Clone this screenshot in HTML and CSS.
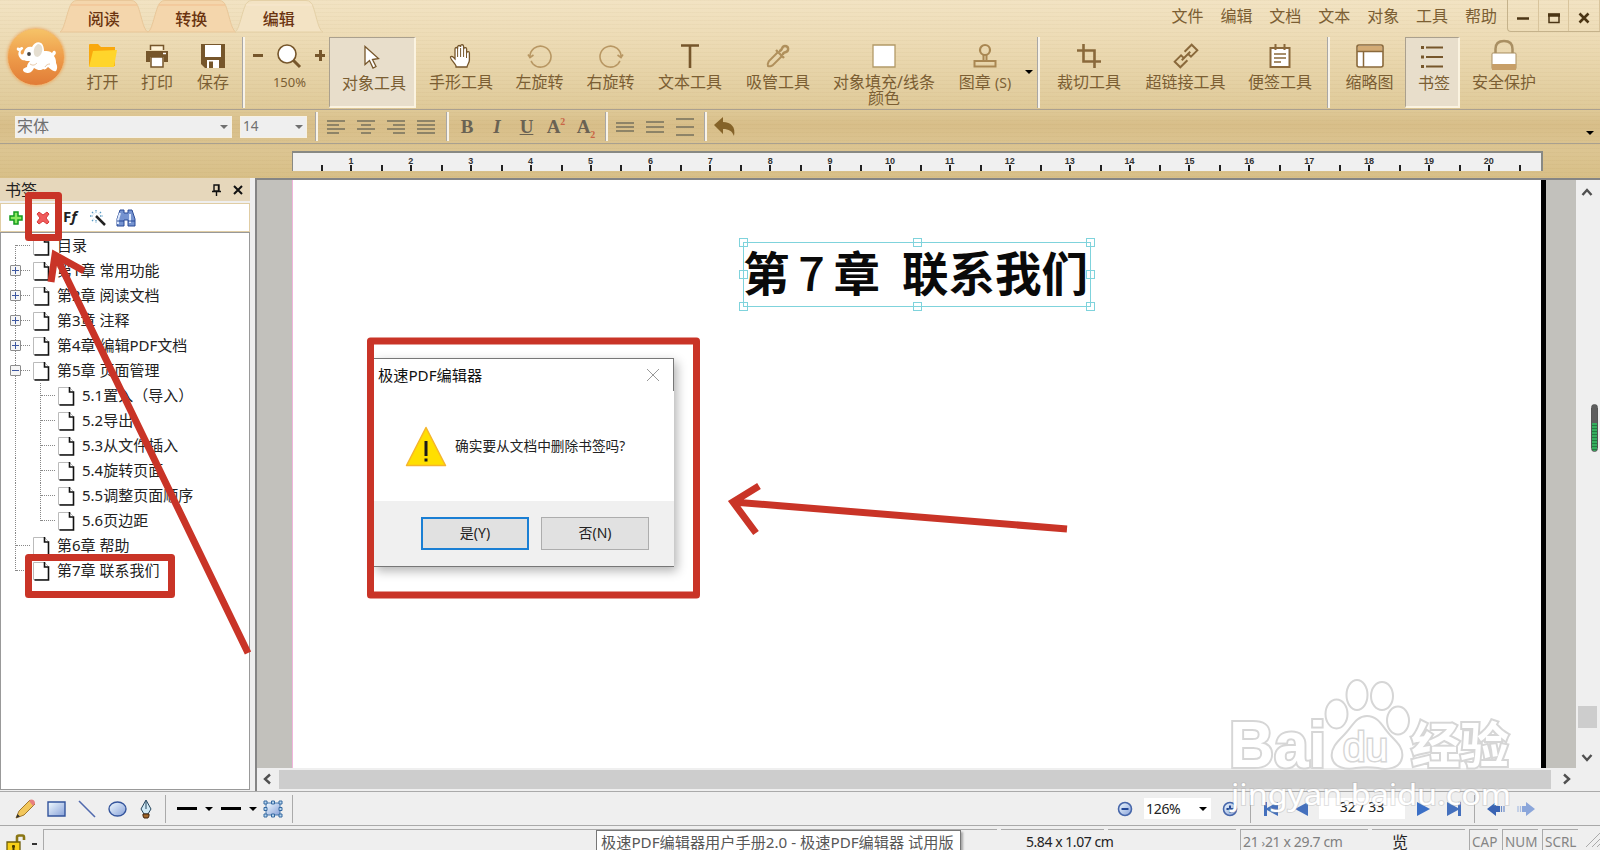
FILE: index.html
```html
<!DOCTYPE html>
<html lang="zh-CN">
<head>
  <meta charset="UTF-8">
  <meta name="viewport" content="width=device-width, initial-scale=1.0">
  <title>极速PDF编辑器</title>
  <link rel="stylesheet" href="styles.css">
</head>
<body>
  <!-- Shared icon -->
  <svg class="defs" width="0" height="0">
    <symbol id="page" viewBox="0 0 17 19">
      <path d="M.5 .5h11l4 4v13H.5z" fill="#fff" stroke="#bbb"/>
      <path d="M11.5 0v5h4v13H1.500" fill="none" stroke="#111" stroke-width="1.600"/>
    </symbol>
  </svg>

  <div class="skin">
    <div class="titlebar">
      <div class="tabs">
        <div class="tab"><svg viewBox="0 0 88 32"><path d="M0 32C5 30 8 4 13 2Q14 .5 17 .5H71Q74 .5 75 2C80 4 82 30 88 32z"/><path class="lip" d="M11 5h66"/></svg><span>阅读</span></div>
        <div class="tab"><svg viewBox="0 0 88 32"><path d="M0 32C5 30 8 4 13 2Q14 .5 17 .5H71Q74 .5 75 2C80 4 82 30 88 32z"/><path class="lip" d="M11 5h66"/></svg><span>转换</span></div>
        <div class="tab active"><svg viewBox="0 0 88 32"><path d="M0 32C5 30 8 4 13 2Q14 .5 17 .5H71Q74 .5 75 2C80 4 82 30 88 32z"/><path class="lip" d="M11 5h66"/></svg><span>编辑</span></div>
      </div>
      <div class="menu">
        <span>文件</span><span>编辑</span><span>文档</span><span>文本</span><span>对象</span><span>工具</span><span>帮助</span>
      </div>
      <div class="winbtns">
        <span><svg width="12" height="12"><path d="M0 6.500h12" stroke="#4b3514" stroke-width="2.500"/></svg></span>
        <span><svg width="12" height="12"><path d="M1 2.500h10v8H1z" fill="none" stroke="#4b3514" stroke-width="1.500"/><path d="M0 3h12" stroke="#4b3514" stroke-width="3.500"/></svg></span>
        <span><svg width="12" height="12"><path d="M1.500 1.500l9 9M10.500 1.500l-9 9" stroke="#4b3514" stroke-width="2.600"/></svg></span>
      </div>
    </div>

    <div class="logo">
      <svg width="41" height="31" viewBox="0 0 41 31">
        <path d="M1 6c1-1 2 0 3 0 1-2 4-1 3 1-2 1-3 3-2 5 1 1 3 0 3-2 1-4 4-6 8-5 2-4 6-6 9-4 2 1 3 5 3 8 3 0 6 0 8 2 1-1 1-3 3-2 2 2 0 4-1 5 2 3 2 5 2 7 1 2 2 5 0 8-3 1-5-2-8-4-2 2-3 3-5 2-2 2-6 1-9-1-1 2-3 5-6 5-2 0-5-1-5-3s2-2 4-3c0-2 1-4 3-6-4 0-8 0-10-3-2-2-2-5-1-7-1 0-3-1-2-3z" fill="#fff"/>
        <ellipse cx="22" cy="8.500" rx="4.200" ry="6.500" fill="#e5ded0" transform="rotate(12 22 8.500)"/>
        <circle cx="13" cy="12" r="1.900" fill="#454545"/>
        <path d="M14 22c3 2 5 1 7-1M29 25c1-2 3-3 5-3" fill="none" stroke="#e8c9a8"/>
      </svg>
    </div>

    <div class="ribbon">
      <div class="tool open"><svg width="30" height="24"><path d="M1 1q0-1 1-1h8l3 3h14v19H1z" fill="#f9a80d"/><path d="M5 7l24-1-3 17H1z" fill="#ffd52b"/></svg><label>打开</label></div>
      <div class="tool print"><svg width="24" height="24"><path d="M5.500 6V1.500h13V6" fill="#fff3d8" stroke="#76562b" stroke-width="1.500"/><path d="M1 7h22v11h-4v-5H5v5H1z" fill="#76562b"/><path d="M6 13h12v10H6z" fill="#fff" stroke="#76562b" stroke-width="1.500"/><path d="M18 9.500h3" stroke="#fff" stroke-width="1.500"/></svg><label>打印</label></div>
      <div class="tool save"><svg width="24" height="24"><path d="M0 0h24v24H4l-4-4z" fill="#76562b"/><path d="M4 1h16v12H4zM6 16h12v8H6z" fill="#fff"/><path d="M8 17.500h4V24H8z" fill="#76562b"/></svg><label>保存</label></div>
      <i class="sep"></i>
      <div class="tool zoom">
        <div class="zoom-row"><b class="minus"></b><svg width="24" height="24"><path d="M16 16l7 7" stroke="#76562b" stroke-width="3"/><circle cx="10" cy="10" r="9" fill="#fff" stroke="#76562b" stroke-width="1.600"/></svg><b class="minus plus"></b></div>
        <label>150%</label>
      </div>
      <div class="tool pressed object"><svg width="24" height="24"><path d="M5 1.500v18l4.500-4 3.500 7.500 3-1.500-3.500-7 6-1z" fill="#fff" stroke="#76562b" stroke-width="1.300"/></svg><label>对象工具</label></div>
      <div class="tool hand"><svg width="24" height="24"><path d="M7 22c-1-3-6-7-5.500-9C3 11 5 14 6 15V5c0-2 2.600-2 2.600 0V3c0-2 3-2 3 0V2c.5-2 3-1.500 3 .5V5c.5-2 3-1.500 3 0v4c.5-2 2.800-1.500 2.800 0v7c0 3-2 4-2.400 7H7z" fill="#fff" stroke="#76562b" stroke-width="1.300"/><path d="M8.600 5v8M11.600 4v9M14.600 5v8M17.500 8v6" stroke="#76562b"/></svg><label>手形工具</label></div>
      <div class="tool left"><svg width="24" height="24"><path d="M2 13A10.500 10.500 0 1 1 5 20M0 10.500l2 3 3.500-2.500M5 20l-2-3" fill="none" stroke="#b89763" stroke-width="1.600"/></svg><label>左旋转</label></div>
      <div class="tool right"><svg width="24" height="24"><path d="M22 13A10.500 10.500 0 1 0 19 20M24 10.500l-2 3-3.500-2.500M19 20l2-3" fill="none" stroke="#b89763" stroke-width="1.600"/></svg><label>右旋转</label></div>
      <div class="tool text"><svg width="24" height="24"><path d="M3 1.500h18M12 1v23" stroke="#76562b" stroke-width="2.600"/></svg><label>文本工具</label></div>
      <div class="tool pipette"><svg width="24" height="24"><path d="M12 8L3 17c-1 2-2 3-1 5 2 1 3 0 5-1l9-9" fill="none" stroke="#b0905c" stroke-width="2"/><path d="M10 6l8 8M13 7c4 0 2-5 6-5s4 5 1 6-3 1-3 3" fill="none" stroke="#b0905c" stroke-width="2.400"/></svg><label>吸管工具</label></div>
      <div class="tool fill"><svg width="24" height="24"><path d="M1 1h22v22H1z" fill="#fff" stroke="#b39a68" stroke-width="1.300"/></svg><label>对象填充/线条<br>颜色</label></div>
      <div class="tool stamp"><svg width="24" height="24"><circle cx="12" cy="6" r="5" fill="none" stroke="#a98752" stroke-width="2.200"/><path d="M10.500 11v6M13.500 11v6M1.500 17h21v5.500h-21z" fill="none" stroke="#a98752" stroke-width="2"/></svg><label>图章 <small>(S)</small></label></div>
      <i class="drop"></i>
      <i class="sep"></i>
      <div class="tool crop"><svg width="24" height="24"><path d="M0 6.500h17.500V24M6.500 0v17.500H24" fill="none" stroke="#8a693b" stroke-width="2.600"/></svg><label>裁切工具</label></div>
      <div class="tool link"><svg width="24" height="24"><g transform="rotate(-45 12 12)" fill="none" stroke="#8a693b" stroke-width="2"><path d="M10 16H0V8h9v3M14 8h10v8h-9v-3M6 12h12"/></g></svg><label>超链接工具</label></div>
      <div class="tool note"><svg width="24" height="24"><path d="M2.500 4h19v19h-19z" fill="#fff" stroke="#8a693b" stroke-width="2"/><path d="M7.500 0v6M16.500 0v6" stroke="#8a693b" stroke-width="2"/><path d="M6 10h12M6 14h12M6 18h7" stroke="#8a693b" stroke-width="1.300"/></svg><label>便签工具</label></div>
      <i class="sep wide"></i>
      <div class="tool thumb"><svg width="28" height="24"><rect x="1" y="1" width="26" height="22" rx="2" fill="#fff" stroke="#8a693b" stroke-width="1.600"/><path d="M2 2h24v5H2z" fill="#d3ab75"/><path d="M1 7.500h26M7.500 8v15" stroke="#8a693b" stroke-width="1.500"/></svg><label>缩略图</label></div>
      <div class="tool pressed mark"><svg width="24" height="24"><path d="M6 2.500h17M6 12h17M6 21.500h17" stroke="#76562b" stroke-width="2"/><path d="M1 2.500h3M1 12h3M1 21.500h3" stroke="#76562b" stroke-width="3"/></svg><label>书签</label></div>
      <div class="tool lock"><svg width="26" height="31"><path d="M4.500 13V9q0-8 8.500-8t8.500 8v4" fill="none" stroke="#a98f62" stroke-width="2.500"/><rect x="1" y="13" width="24" height="16" rx="1" fill="#fff" stroke="#a98f62"/><path d="M1 24h24v6H1z" fill="#c79f68"/></svg><label>安全保护</label></div>
    </div>

    <div class="format">
      <div class="combo font"><span>宋体</span><i class="drop"></i></div>
      <div class="combo size"><span>14</span><i class="drop"></i></div>
      <i class="sep s1"></i>
      <svg class="lines" width="18" height="14"><path d="M0 1h18M0 5h12M0 9h18M0 13h12"/></svg>
      <svg class="lines" width="18" height="14"><path d="M0 1h18M4 5h10M0 9h18M4 13h10"/></svg>
      <svg class="lines" width="18" height="14"><path d="M0 1h18M6 5h12M0 9h18M6 13h12"/></svg>
      <svg class="lines" width="18" height="14"><path d="M0 1h18M0 5h18M0 9h18M0 13h18"/></svg>
      <i class="sep s2"></i>
      <b class="glyph">B</b><b class="glyph it">I</b><b class="glyph un">U</b><b class="glyph">A<sup>2</sup></b><b class="glyph">A<sub>2</sub></b>
      <i class="sep s3"></i>
      <svg class="lines" width="18" height="18"><path d="M0 5h18M0 9h18M0 13h18"/></svg>
      <svg class="lines" width="18" height="18"><path d="M0 4h18M0 9h18M0 14h18"/></svg>
      <svg class="lines" width="18" height="18"><path d="M0 1h18M0 9h18M0 17h18"/></svg>
      <i class="sep s4"></i>
      <svg width="21" height="19"><path d="M0 8l9-8v5c8 0 13 5 11 14-2-5-5-7-11-7v5z" fill="#856329"/></svg>
      <i class="drop last"></i>
    </div>

    <div class="ruler-row">
      <div class="ruler">
        <span>1</span><span>2</span><span>3</span><span>4</span><span>5</span><span>6</span><span>7</span><span>8</span><span>9</span><span>10</span><span>11</span><span>12</span><span>13</span><span>14</span><span>15</span><span>16</span><span>17</span><span>18</span><span>19</span><span>20</span><span class="end"></span>
      </div>
    </div>
  </div>

  <div class="main">
    <div class="sidebar">
      <div class="side-head"><span>书签</span>
        <svg width="9" height="12"><path d="M2 1h5v6H2zM0 7.500h9M4.500 7v5M6.500 1v6" fill="none" stroke="#111" stroke-width="1.400"/></svg>
        <svg width="10" height="10"><path d="M1 1l8 8M9 1l-8 8" stroke="#111" stroke-width="2"/></svg>
      </div>
      <div class="side-tools">
        <svg width="14" height="14"><path d="M5 1h4v4h4v4H9v4H5V9H1V5h4z" fill="#8be860" stroke="#139a1d" stroke-width="1.500"/></svg>
        <svg width="14" height="14"><path d="M1 3l2-2 4 3 4-3 2 2-3 4 3 4-2 2-4-3-4 3-2-2 3-4z" fill="#f05c5c" stroke="#d93b3b"/></svg>
        <em>F<i>f</i></em>
        <svg width="16" height="16"><path d="M6 6l9 9" stroke="#222" stroke-width="2.500"/><path d="M6 0v3M0 6h3M2 2l2 2M11 2L9 4M2 11l2-2M6 10v3M10 6h3" stroke="#5a9bc4" stroke-width="1.300" stroke-dasharray="1.500 1"/></svg>
        <svg width="20" height="18"><path d="M4 1h4v3h4V1h4l3 9v7h-7v-6H8v6H1v-7z" fill="#7593d0" stroke="#2b4b96"/><path d="M4 4l-2 7v4M14 5v9" stroke="#dce8fc" stroke-width="2"/><path d="M1 12h7M12 12h7" stroke="#2b4b96"/></svg>
      </div>
      <ul class="tree">
        <li class="first"><i class="stem"></i><svg><use href="#page"/></svg>目录</li>
        <li><i class="stem"></i><b class="box plus-box"></b><svg><use href="#page"/></svg>第1章 常用功能</li>
        <li><i class="stem"></i><b class="box plus-box"></b><svg><use href="#page"/></svg>第2章 阅读文档</li>
        <li><i class="stem"></i><b class="box plus-box"></b><svg><use href="#page"/></svg>第3章 注释</li>
        <li><i class="stem"></i><b class="box plus-box"></b><svg><use href="#page"/></svg>第4章 编辑PDF文档</li>
        <li><i class="stem"></i><b class="box"></b><svg><use href="#page"/></svg>第5章 页面管理</li>
        <li><i class="stem pass"></i><i class="stem"></i><svg><use href="#page"/></svg>5.1置入（导入）</li>
        <li><i class="stem pass"></i><i class="stem"></i><svg><use href="#page"/></svg>5.2导出</li>
        <li><i class="stem pass"></i><i class="stem"></i><svg><use href="#page"/></svg>5.3从文件插入</li>
        <li><i class="stem pass"></i><i class="stem"></i><svg><use href="#page"/></svg>5.4旋转页面</li>
        <li><i class="stem pass"></i><i class="stem"></i><svg><use href="#page"/></svg>5.5调整页面顺序</li>
        <li><i class="stem pass"></i><i class="stem half"></i><svg><use href="#page"/></svg>5.6页边距</li>
        <li><i class="stem"></i><svg><use href="#page"/></svg>第6章 帮助</li>
        <li><i class="stem half"></i><svg><use href="#page"/></svg>第7章 联系我们</li>
      </ul>
    </div>

    <div class="viewer">
      <div class="view-row">
        <div class="canvas">
          <div class="paper">
            <h1 class="heading"><span>第</span><span class="num">7</span><span>章</span><span class="gap">联系我们</span>
              <i class="h tl"></i><i class="h tc"></i><i class="h tr"></i><i class="h ml"></i><i class="h mr"></i><i class="h bl"></i><i class="h bc"></i><i class="h br"></i>
            </h1>
          </div>
        </div>
        <div class="vscroll">
          <svg width="12" height="8"><path d="M1.500 7L6 2l4.500 5" /></svg>
          <i class="vthumb"></i>
          <svg width="12" height="8"><path d="M1.500 1L6 6l4.500-5" /></svg>
        </div>
      </div>
      <div class="hscroll">
        <svg width="8" height="12"><path d="M7 1.500L2 6l5 4.500" /></svg>
        <i class="hthumb"></i>
        <svg width="8" height="12"><path d="M1 1.500L6 6l-5 4.500" /></svg>
      </div>
    </div>
  </div>

  <div class="drawbar">
    <svg width="21" height="20" class="pencil"><path d="M1 19l3-7L15 1l5 4L9 16z" fill="#f2c75c" stroke="#a07930"/><path d="M14 2l2-1.500q4 0 4 4L18 7z" fill="#e88080"/><path d="M1 19l1.500-4L5 17.500z" fill="#333"/></svg>
    <svg width="19" height="16"><defs><linearGradient id="blue" x2="1" y2="1"><stop stop-color="#f2fbff"/><stop offset="1" stop-color="#86a0d8"/></linearGradient></defs><path d="M1 1h17v14H1z" fill="url(#blue)" stroke="#33549c" stroke-width="1.400"/></svg>
    <svg width="18" height="18"><path d="M1 1l16 16" stroke="#5069ae" stroke-width="1.600"/></svg>
    <svg width="19" height="16"><ellipse cx="9.500" cy="8" rx="8.500" ry="7" fill="url(#blue)" stroke="#33549c" stroke-width="1.400"/></svg>
    <svg width="14" height="20"><path d="M7 1l5 9-3 5H5l-3-5z" fill="#cfe8f4" stroke="#24455c"/><path d="M7 2v8" stroke="#24455c"/><path d="M4 15h6v2l-1 2H5l-1-2z" fill="#a0672c" stroke="#40240c"/></svg>
    <i class="bar"></i>
    <b class="stroke"></b><i class="drop"></i>
    <b class="stroke"></b><i class="drop"></i>
    <svg width="20" height="18"><path d="M3 3h14v12H3z" fill="url(#blue)" stroke="#4978ad"/><path d="M1 1h3v3H1zM8.500 1h3v3h-3zM16 1h3v3h-3zM1 7.500h3v3H1zM16 7.500h3v3h-3zM1 14h3v3H1zM8.500 14h3v3h-3zM16 14h3v3h-3z" fill="#b9d7ef" stroke="#3568a0"/></svg>
    <i class="bar"></i>
    <div class="nav">
      <svg width="16" height="16"><circle cx="8" cy="8" r="6.500" fill="url(#blue)" stroke="#4666aa" stroke-width="1.600"/><path d="M4.500 8h7" stroke="#234898" stroke-width="2"/></svg>
      <div class="percent"><span>126%</span><i class="drop"></i></div>
      <svg width="16" height="16"><circle cx="8" cy="8" r="6.500" fill="url(#blue)" stroke="#4666aa" stroke-width="1.600"/><path d="M4.500 8h7M8 4.500v7" stroke="#234898" stroke-width="2"/></svg>
      <i class="bar"></i>
      <svg width="16" height="14"><path d="M1 0h3v6l11-6v14L4 8v6H1z" fill="#4470bd"/></svg>
      <svg width="16" height="14" class="prev"><path d="M15 0v14L2 7z" fill="#4470bd"/></svg>
      <div class="pages">32 / 33</div>
      <svg width="16" height="14"><path d="M1 0v14l13-7z" fill="#3b6fc6"/></svg>
      <svg width="16" height="14" class="lastpg"><path d="M15 0h-3v6L1 0v14l11-6v6h3z" fill="#4470bd"/></svg>
      <i class="bar"></i>
      <svg width="18" height="14"><path d="M0 7l9-7v4h4v6H9v4z" fill="#3a64b4"/><path d="M14.500 4v6M17 4v6" stroke="#6d8cc8" stroke-width="1.200"/></svg>
      <svg width="18" height="14" class="fwd"><path d="M18 7L9 0v4H5v6h4v4z" fill="#8ba6da"/><path d="M3.500 4v6M1 4v6" stroke="#a9bde2" stroke-width="1.200"/></svg>
    </div>
  </div>

  <div class="status">
    <div class="lockcell"><svg width="20" height="20"><path d="M11 8V3q0-1.500 2-1.500h3.500q1.500 0 1.500 2V6" fill="none" stroke="#8a7614" stroke-width="2.600"/><path d="M1 8h13v11H1z" fill="#f7cf18" stroke="#6e5d0a" stroke-width="1.300"/><path d="M7.500 11v5M6 12.500h3" stroke="#4a3c00" stroke-width="2"/></svg><b></b></div>
    <div class="pane p1"></div>
    <div class="pane p2">5.84 x 1.07 cm</div>
    <div class="pane p3"></div>
    <div class="pane p4">21 <small>›</small>21 x 29.7 cm</div>
    <div class="pane p5">览</div>
    <div class="pane p6">CAP</div>
    <div class="pane p7">NUM</div>
    <div class="pane p8">SCRL</div>
    <svg class="grip" width="18" height="18"><path d="M4 18L18 4M10 18l8-8M15 18l3-3" stroke="#aaa"/></svg>
  </div>
  <div class="tip">极速PDF编辑器用户手册2.0 - 极速PDF编辑器 试用版</div>

  <div class="gauge"></div>

  <div class="dialog">
    <div class="dlg-title"><span>极速PDF编辑器</span><svg width="14" height="14"><path d="M1 1l12 12M13 1L1 13" stroke="#999"/></svg></div>
    <div class="dlg-body">
      <svg width="42" height="42"><path d="M21 2.500L40.500 40.500H1.500z" fill="#ffdf00" stroke="#f5b52c" stroke-width="1.500" stroke-linejoin="round"/><path d="M21 16v15M21 33.500v3" stroke="#1a1a1a" stroke-width="3"/></svg>
      <span>确实要从文档中删除书签吗?</span>
    </div>
    <div class="dlg-foot"><button class="yes">是(Y)</button><button>否(N)</button></div>
  </div>

  <!-- Watermark -->
  <svg class="overlay" width="1600" height="850">
    <g fill="#fff" stroke="#d6d6d6" stroke-width="2">
      <text class="wm" x="1229" y="767" font-size="64" textLength="97" lengthAdjust="spacingAndGlyphs">Bai</text>
      <ellipse cx="1336.500" cy="714" rx="11" ry="14.500"/>
      <ellipse cx="1357" cy="695" rx="10.500" ry="15"/>
      <ellipse cx="1382" cy="696" rx="11" ry="14"/>
      <ellipse cx="1398" cy="720.500" rx="11" ry="14"/>
      <path d="M1367 716c12 0 16 12 24 20 7 7 13 13 11 22-2 11-16 12-24 10-8-1-14-1-22 0-9 2-22 0-24-10-2-9 5-16 12-23 8-8 12-19 23-19z"/>
      <text class="wm du" x="1343" y="761" font-size="40" textLength="45" lengthAdjust="spacingAndGlyphs">du</text>
      <text class="wm cjk" x="1411" y="763" font-size="49">经验</text>
    </g>
    <text class="url" x="1231" y="805" font-size="29" textLength="280" lengthAdjust="spacingAndGlyphs">jingyan.baidu.com</text>
  </svg>

  <!-- Red step marks -->
  <svg class="overlay" width="1600" height="850" fill="none" stroke="#c93427" stroke-width="7" stroke-linejoin="round">
    <rect x="28.500" y="195.500" width="30" height="42"/>
    <rect x="28.500" y="557.500" width="143" height="37"/>
    <rect x="370.500" y="341" width="326" height="254"/>
    <g stroke-linejoin="miter">
      <path d="M248 653L56 256M51 282l4-27 29 16"/>
      <path d="M1067 529L733 502M759 486l-26 16 23 31"/>
    </g>
  </svg>
</body>
</html>
```
FILE: styles.css
```css
* {
  box-sizing: border-box;
}

body {
  margin: 0;
  width: 1600px;
  height: 850px;
  overflow: hidden;
  position: relative;
  display: flex;
  flex-direction: column;
  background-color: #efefef;
  font-family: "Noto Sans", "Noto Sans CJK SC", sans-serif;
  color: #222;
}

svg {
  display: block;
  flex: none;
  overflow: visible;
}

.defs {
  position: absolute;
}

/* Skin */
.skin {
  position: relative;
  height: 178px;
  flex: none;
  background:
    repeating-linear-gradient(rgba(120, 85, 20, 0.035) 0 1px, transparent 1px 4px),
    linear-gradient(#f2e3c3 0, #ecdab3 45px, #dfca99 108px, #d8be89 125px, #dcc592 150px, #d8bf87 178px);
}

.titlebar {
  display: flex;
  height: 32px;
}

.tabs {
  display: flex;
  margin-left: 60px;
}

.tab {
  position: relative;
  width: 87.500px;
  height: 32px;
  text-align: center;
  font-size: 16px;
  line-height: 38px;
  font-weight: 500;
  color: #6b3410;
}

.tab svg {
  position: absolute;
  left: 0;
  top: 0;
  width: 88px;
  height: 32px;
  fill: #f4d6ac;
  stroke: #e9c799;
}

.tab .lip {
  stroke: #f1bd8d;
}

.tab.active svg {
  fill: #f3e3c4;
  stroke: #e4d0a6;
}

.tab.active .lip {
  stroke: #f8e8cf;
}

.tab span {
  position: relative;
}

.menu {
  display: flex;
  gap: 16.900px;
  margin-left: auto;
  margin-right: 10px;
  font-size: 16px;
  line-height: 32px;
  color: #7b5e33;
}

.winbtns {
  display: flex;
  width: 93px;
  border: 1px solid #c5b28b;
  border-width: 0 0 1px 1px;
  border-radius: 0 0 0 4px;
}

.winbtns span {
  flex: 1;
  display: flex;
  align-items: center;
  justify-content: center;
  padding-top: 4px;
  border-right: 1px solid #d8c49c;
}

.logo {
  position: absolute;
  left: 7px;
  top: 28px;
  width: 58px;
  height: 58px;
  border-radius: 50%;
  background: linear-gradient(#f6c368, #ee9c4a 50%, #e17c37);
  border: 1px solid #efb977;
  box-shadow: 0 0 3px #e9a660;
  display: flex;
  align-items: center;
  justify-content: center;
}

/* Ribbon */
.ribbon {
  display: flex;
  height: 78px;
  padding: 5px 0 1px 75px;
  border-bottom: 1px solid #aaa090;
}

.tool {
  display: flex;
  flex-direction: column;
  align-items: center;
  padding-top: 7px;
  font-size: 16px;
  line-height: 16px;
  color: #7b5e33;
  text-align: center;
  white-space: nowrap;
}

.tool label {
  margin-top: 6px;
}

.tool small {
  font-size: 14px;
}

.pressed {
  background-color: #e8decb;
  border: 2px solid #fbf3e0;
  border-width: 1px 2px 2px 1px;
  border-top-color: #aaa08e;
  border-left-color: #aaa08e;
}

.object label,
.mark label {
  position: relative;
  left: 2px;
}

.open { width: 55px; }
.print { width: 54px; }
.save { width: 58px; }
.zoom { width: 84px; font-size: 13px; }
.object { width: 87px; }
.hand { width: 90px; }
.left { width: 67px; }
.right { width: 75px; }
.text { width: 84px; }
.pipette { width: 92px; }
.fill { width: 120px; }
.stamp { width: 82px; }
.crop { width: 98px; }
.link { width: 95px; }
.note { width: 94px; }
.thumb { width: 71px; }
.mark { width: 55px; }
.lock { width: 88px; padding-top: 3px; }
.lock label { margin-top: 3px; }

.zoom label {
  padding-left: 5px;
}

.zoom-row {
  display: flex;
  gap: 14px;
  padding-left: 4px;
}

.minus {
  position: relative;
  width: 10px;
  height: 3px;
  margin-top: 10px;
  background-color: #76562b;
}

.plus::after {
  content: "";
  position: absolute;
  left: 3.500px;
  top: -4px;
  width: 3px;
  height: 11px;
  background-color: #76562b;
}

.sep {
  flex: none;
  width: 3px;
  border-left: 1px solid #a9a7a5;
  background-color: #f8f3e8;
}

.sep.wide {
  margin-right: 4px;
}

.drop {
  flex: none;
  width: 0;
  height: 0;
  border: 4px solid transparent;
  border-top: 4px solid #000;
  border-bottom: 0;
}

.ribbon .drop {
  margin: 33px 4px 0 -1px;
}

/* Format bar */
.format {
  display: flex;
  align-items: center;
  height: 34px;
  padding: 0 6px 0 15px;
  border-bottom: 1px solid #a9a08f;
}

.format .sep {
  height: 29px;
}

.combo {
  display: flex;
  align-items: center;
  height: 22px;
  background-color: #efefef;
  border: 1px solid #f6f1e5;
  color: #707070;
  font-size: 16px;
}

.combo .drop {
  margin: 0 3px 0 auto;
  border-top-color: #707070;
}

.combo.font {
  width: 217px;
}

.combo.font span {
  padding: 0 0 4px 1px;
}

.combo.size {
  width: 67px;
  margin-left: 8px;
  padding-left: 2px;
  font-size: 13.500px;
}

.combo.size span {
  padding-bottom: 1px;
}

.lines {
  fill: none;
  stroke: #75705c;
  stroke-width: 1.300;
  margin-right: 12px;
}

.s1 { margin: 0 9px 0 8px; }
.s2 { margin: 0 3px 0 -1px; }
.s3 { margin: 0 8px 0 4px; }
.s4 { margin: 0 7px 0 -2px; }

.glyph {
  width: 30px;
  text-align: center;
  font-family: "Liberation Serif", serif;
  font-size: 19px;
  line-height: 20px;
  color: #6a6253;
}

.it { font-style: italic; }
.un { text-decoration: underline; width: 29px; }

.glyph sup,
.glyph sub {
  font-size: 10px;
  line-height: 0;
  color: #c96545;
}

.glyph sup {
  vertical-align: 8px;
}

.format .last {
  margin-left: auto;
  margin-top: 13px;
}

/* Ruler */
.ruler-row {
  padding: 7px 0 0 292px;
}

.ruler {
  display: flex;
  width: 1251px;
  height: 20px;
  padding-left: 28px;
  background-color: #f0f0f0;
  border: 2px solid #888984;
  border-width: 2px 2px 0 1px;
}

.ruler span {
  position: relative;
  flex: 0 0 59.900px;
  text-align: center;
  font: bold 9px/16px "Liberation Sans", sans-serif;
  color: #333;
}

.ruler span::before,
.ruler span::after {
  content: "";
  position: absolute;
  left: 0;
  top: 12px;
  width: 2px;
  height: 6px;
  background-color: #222;
}

.ruler span::after {
  left: 29px;
}

.ruler .end {
  flex-basis: 10px;
}

.ruler .end::after {
  display: none;
}

/* Bookmarks panel */
.main {
  display: flex;
  height: 614px;
  flex: none;
  border-bottom: 1px solid #aaa;
}

.sidebar {
  display: flex;
  flex-direction: column;
  width: 250px;
  margin-right: 5px;
  padding-bottom: 1px;
}

.side-head {
  display: flex;
  align-items: center;
  gap: 12px;
  height: 23px;
  padding: 0 7px 0 5px;
  font-size: 16px;
  background-color: #e6d7bb;
}

.side-head span {
  flex: 1;
  padding-bottom: 2px;
}

.side-tools {
  display: flex;
  align-items: center;
  gap: 13px;
  height: 29px;
  margin-top: 2px;
  padding-left: 8px;
  background-color: #fff;
  border: 1px solid #e0cda4;
}

.side-tools em {
  font: bold 15px/16px "Noto Sans", sans-serif;
  width: 14px;
  margin: -3px 0 0;
}

.side-tools em i {
  font-style: italic;
}

.side-tools svg:last-child {
  margin-left: -3px;
}

.tree {
  flex: 1;
  margin: 0;
  padding: 0 0 0 14px;
  list-style: none;
  background-color: #fff;
  border: 1px solid #999;
}

.tree li {
  position: relative;
  display: flex;
  align-items: center;
  height: 25px;
  font-size: 15px;
  line-height: 23px;
  padding-bottom: 1px;
  white-space: pre;
}

.tree svg {
  width: 17px;
  height: 19px;
  margin: 3px 7px 0 3px;
}

.stem {
  position: relative;
  flex: none;
  align-self: flex-start;
  width: 15px;
  height: 25px;
  border-left: 1px dotted #888;
}

.stem::after {
  content: "";
  position: absolute;
  left: 0;
  top: 12px;
  width: 14px;
  border-top: 1px dotted #888;
}

.pass {
  width: 25px;
}

.pass::after {
  display: none;
}

.half {
  height: 13px;
}

.first .stem {
  height: 13px;
  margin-top: 12px;
}

.first .stem::after {
  top: 0;
}

.box {
  position: absolute;
  left: -5px;
  top: 7px;
  width: 11px;
  height: 11px;
  border: 1px solid #8c8c8c;
  border-radius: 1px;
  background: linear-gradient(#3e57a0, #3e57a0) center / 7px 1px no-repeat #f6f6f6;
}

.plus-box {
  background:
    linear-gradient(#3e57a0, #3e57a0) center / 7px 1px no-repeat,
    linear-gradient(#3e57a0, #3e57a0) center / 1px 7px no-repeat #f6f6f6;
}

/* Document */
.viewer {
  display: flex;
  flex-direction: column;
  flex: 1;
  border-top: 2px solid #858585;
  border-left: 2px solid #858585;
}

.view-row {
  display: flex;
  height: 588px;
}

.canvas {
  width: 1319px;
  padding-left: 35px;
  background-color: #c2c1bc;
}

.paper {
  width: 1254px;
  height: 100%;
  padding: 62px 0 0 450px;
  background-color: #fff;
  border-left: 1px solid #f1b5dc;
  border-right: 5px solid #000;
}

.heading {
  position: relative;
  display: flex;
  width: 348px;
  height: 65px;
  margin: 0;
  border: 1.500px solid #7fd3dc;
  font: bold 46.500px/55px "Noto Sans CJK SC", sans-serif;
  color: #0a0a0a;
  white-space: nowrap;
  text-indent: -1px;
}

.num {
  width: 45px;
  text-align: center;
  font-weight: 500;
}

.gap {
  margin-left: 23px;
}

.h {
  position: absolute;
  width: 9px;
  height: 9px;
  border: 1.500px solid #7fd3dc;
}

.tl, .tc, .tr { top: -5px; }
.ml, .mr { top: 27px; }
.bl, .bc, .br { bottom: -5px; }
.tl, .ml, .bl { left: -5px; }
.tc, .bc { left: 169px; }
.tr, .mr, .br { right: -5px; }

.vscroll {
  display: flex;
  flex-direction: column;
  align-items: center;
  width: 20px;
  margin-left: 1px;
  padding: 8px 0 6px;
}

.vscroll svg,
.hscroll svg {
  fill: none;
  stroke: #505050;
  stroke-width: 2.400;
}

.vthumb {
  width: 19px;
  height: 22px;
  margin: auto 0 26px;
  background-color: #cdcdcd;
}

.hscroll {
  display: flex;
  align-items: center;
  height: 22px;
  padding-left: 6px;
}

.hthumb {
  width: 1272px;
  height: 19px;
  margin: 0 12px 0 8px;
  background-color: #cdcdcd;
}

/* Drawing bar */
.drawbar {
  display: flex;
  align-items: center;
  height: 34px;
  flex: none;
  gap: 12px;
  padding-left: 15px;
  border-bottom: 1px solid #a9a9a9;
}

.bar {
  width: 1px;
  height: 28px;
  background-color: #aaa;
}

.pencil {
  margin-right: -1px;
}

.stroke {
  width: 20px;
  height: 3px;
  background-color: #000;
  margin: 0 -4px 0 -2px;
}

.drawbar > .bar {
  margin-right: 1px;
}

.drawbar > .drop + .stroke {
  margin-left: -4px;
}

.drawbar > .drop + svg {
  margin-left: -6px;
  margin-right: -3px;
}

.nav {
  display: flex;
  align-items: center;
  width: 483px;
  margin-left: auto;
}

.percent {
  display: flex;
  align-items: center;
  width: 67px;
  height: 21px;
  margin: 0 11px;
  padding: 0 4px 0 2px;
  background-color: #fff;
  font-size: 14px;
  letter-spacing: -0.300px;
}

.percent .drop {
  margin-left: auto;
}

.nav > .bar {
  margin: 0 12px;
}

.prev {
  margin-left: 14px;
}

.pages {
  width: 86px;
  height: 21px;
  margin: 0 11px 0 10px;
  background-color: #fff;
  font-size: 14px;
  line-height: 18px;
  text-align: center;
}

.lastpg {
  margin-left: 14px;
}

.fwd {
  margin-left: 12px;
}

/* Status bar */
.status {
  display: flex;
  flex: 1;
  gap: 4px;
  padding-top: 3px;
  font-size: 14px;
  line-height: 24px;
  white-space: nowrap;
}

.lockcell {
  display: flex;
  align-items: center;
  gap: 6px;
  width: 39px;
  padding: 3px 0 0 6px;
}

.lockcell b {
  width: 5px;
  height: 2px;
  background-color: #333;
}

.pane {
  border-top: 1px solid #aaa;
}

.p1 { width: 954px; border-left: 1px solid #aaa; }
.p2 { width: 103px; padding-left: 25px; letter-spacing: -0.450px; }
.p3 { width: 128px; }
.p4 { width: 128px; padding-left: 2px; border-left: 1px solid #aaa; color: #808080; letter-spacing: -0.350px; }
.p5 { width: 93px; padding-left: 20px; font-size: 16px; }
.p6 { width: 29px; }
.p7 { width: 36px; }
.p8 { width: 36px; }

.p6, .p7, .p8 {
  padding-left: 2px;
  border-left: 1px solid #aaa;
  color: #858585;
  font-size: 13.500px;
}

.grip {
  margin-left: auto;
}

.tip {
  position: absolute;
  left: 596px;
  top: 830px;
  width: 365px;
  height: 24px;
  padding-left: 4px;
  background-color: #fff;
  border: 1px solid #777;
  box-shadow: 2px 2px 2px rgba(0, 0, 0, 0.3);
  font-size: 15.200px;
  line-height: 23px;
  color: #575757;
  white-space: nowrap;
}

.gauge {
  position: absolute;
  left: 1591px;
  top: 404px;
  width: 7px;
  height: 48px;
  border: 1px solid #555;
  border-radius: 4px;
  background:
    linear-gradient(#5d5d5d 18px, transparent 18px),
    repeating-linear-gradient(#35ad5e 0 2px, #217d40 2px 3px);
}

/* Confirm dialog */
.dialog {
  position: absolute;
  left: 373px;
  top: 358px;
  width: 301px;
  height: 209px;
  background-color: #fff;
  border: 1px solid #777;
  border-width: 1px 0;
  box-shadow: 3px 4px 10px rgba(0, 0, 0, 0.3);
}

.dlg-title {
  display: flex;
  align-items: center;
  justify-content: space-between;
  height: 32px;
  padding: 0 13px 0 5px;
  border-right: 1px solid #777;
  font-size: 15.200px;
  color: #111;
}

.dlg-title span {
  padding-bottom: 3px;
}

.dlg-body {
  display: flex;
  align-items: center;
  gap: 8px;
  height: 110px;
  padding: 0 0 0 32px;
  font-size: 13.700px;
}

.dlg-body span {
  padding-bottom: 3px;
}

.dlg-foot {
  display: flex;
  gap: 12px;
  height: 65px;
  padding: 16px 0 0 48px;
  background-color: #f0f0f0;
}

.dlg-foot button {
  width: 108px;
  height: 33px;
  padding: 0 0 3px;
  background-color: #e1e1e1;
  border: 1px solid #adadad;
  font-family: inherit;
  font-size: 14px;
  color: #222;
}

.dlg-foot .yes {
  border: 2px solid #1a7fd4;
}

/* Overlays */
.overlay {
  position: absolute;
  left: 0;
  top: 0;
  pointer-events: none;
}

.wm {
  font-family: "Liberation Sans", sans-serif;
  font-weight: bold;
  paint-order: stroke;
  stroke-width: 4;
}

.du {
  font-weight: normal;
  stroke-width: 3;
}

.cjk {
  font-family: "Noto Sans CJK SC", sans-serif;
}

.url {
  font-family: "Noto Sans", sans-serif;
  fill: #fff;
  stroke: rgba(170, 170, 170, 0.35);
  stroke-width: 2;
  paint-order: stroke;
}
```
